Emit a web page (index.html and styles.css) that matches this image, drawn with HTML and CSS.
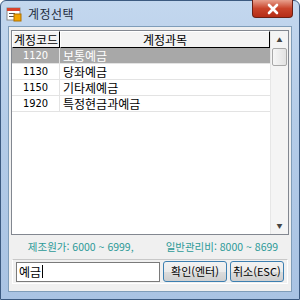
FILE: index.html
```html
<!DOCTYPE html>
<html lang="ko">
<head>
<meta charset="UTF-8" />
<title>계정선택</title>
<link rel="stylesheet" href="styles.css">
</head>
<body>
  <div class="window">
    <div class="titlebar">
      <svg class="app-icon" width="16" height="16" viewBox="0 0 16 16">
        <rect x="1" y="2" width="13" height="12" fill="#fff" stroke="#8a8a8a"/>
        <rect x="1" y="2" width="13" height="3" fill="#d9432b"/>
        <rect x="3" y="7" width="6" height="1" fill="#555"/>
        <rect x="3" y="10" width="5" height="1" fill="#555"/>
        <rect x="8" y="8" width="7" height="7" fill="#f2a500" stroke="#b07000"/>
      </svg>
      <span class="title">계정선택</span>
      <div class="close-btn">
        <svg width="14" height="12" viewBox="0 0 14 12">
          <path d="M3 2 L11 10 M11 2 L3 10" stroke="#fff" stroke-width="2.6" stroke-linecap="round"/>
        </svg>
      </div>
    </div>
    <div class="client">
      <div class="listview">
        <div class="list-main">
          <div class="list-header">
            <div class="col-code">계정코드</div>
            <div class="col-name">계정과목</div>
          </div>
          <div class="list-body" id="list-body"></div>
        </div>
        <div class="scrollbar">
          <div class="arrow">▲</div>
          <div class="thumb"></div>
          <div class="track"></div>
          <div class="arrow">▼</div>
        </div>
      </div>
      <div class="range-info">
        <span>제조원가: 6000 ~ 6999,</span>
        <span>일반관리비: 8000 ~ 8699</span>
      </div>
      <div class="search-panel">
        <div class="search-input">예금<span class="caret"></span></div>
        <button class="btn btn-ok">확인(엔터)</button>
        <button class="btn btn-cancel">취소(ESC)</button>
      </div>
    </div>
  </div>

<script>
  const accounts = [
    { code: '1120', name: '보통예금' },
    { code: '1130', name: '당좌예금' },
    { code: '1150', name: '기타제예금' },
    { code: '1920', name: '특정현금과예금' }
  ];

  const listBody = document.getElementById('list-body');
  accounts.forEach((a, i) => {
    const row = document.createElement('div');
    row.className = 'list-row' + (i === 0 ? ' selected' : '');
    row.innerHTML = `<div class="col-code">${a.code}</div><div class="col-name">${a.name}</div>`;
    listBody.appendChild(row);
  });
</script>
</body>
</html>
```

FILE: styles.css
```css
body, html {
  margin: 0;
  padding: 0;
  background: #fff;
  font-family: "Noto Sans CJK KR", "DejaVu Sans", sans-serif;
}
.window {
  width: 300px;
  height: 300px;
  box-sizing: border-box;
  border: 1px solid #3c5a80;
  border-radius: 6px 6px 0 0;
  background: linear-gradient(#c3d7ee, #b4cce8 40%, #a9c3e3);
  display: flex;
  flex-direction: column;
}
.titlebar {
  height: 25px;
  display: flex;
  align-items: center;
  padding-left: 5px;
  position: relative;
}
.app-icon {
  margin-right: 6px;
}
.title {
  font-size: 12px;
  color: #1e2b3b;
  letter-spacing: 0.5px;
}
.close-btn {
  position: absolute;
  right: 6px;
  top: -1px;
  width: 41px;
  height: 18px;
  box-sizing: border-box;
  border: 1px solid #6b1f14;
  border-top: none;
  border-radius: 0 0 4px 4px;
  background: linear-gradient(#e8a08d, #c9442b 50%, #b52d16);
  display: flex;
  justify-content: center;
  align-items: center;
}
.client {
  flex: 1;
  margin: 0 7px 7px 7px;
  border: 1px solid #7f9db9;
  background: #f0f0f0;
  display: flex;
  flex-direction: column;
  padding: 3px 2px 0 2px;
}
.listview {
  height: 203px;
  border: 1px solid #828790;
  background: #fff;
  display: flex;
}
.list-main {
  flex: 1;
  display: flex;
  flex-direction: column;
}
.list-header {
  display: flex;
  height: 17px;
  font-size: 12px;
  line-height: 16px;
  color: #000;
}
.list-header > div {
  box-sizing: border-box;
  border: 1px solid #000;
  border-top-color: #fff;
  border-left-color: #fff;
  background: #f3f3f3;
  text-align: center;
}
.col-code {
  width: 48px;
  flex: none;
}
.col-name {
  flex: 1;
}
.list-row {
  display: flex;
  height: 16px;
  font-size: 12px;
  line-height: 15px;
  color: #000;
}
.list-row > div {
  box-sizing: border-box;
  border-bottom: 1px solid #e3e3e3;
}
.list-row .col-code {
  text-align: center;
  border-right: 1px solid #e3e3e3;
  font-family: "DejaVu Sans Condensed", "DejaVu Sans", sans-serif;
  font-size: 11px;
}
.list-row .col-name {
  padding-left: 3px;
}
.list-row.selected > div {
  background: #a8a8a8;
  color: #fff;
}
.scrollbar {
  width: 17px;
  border-left: 1px solid #e6e6e6;
  background: #f4f4f4;
  display: flex;
  flex-direction: column;
}
.arrow {
  height: 17px;
  font-size: 6px;
  color: #444;
  text-align: center;
  line-height: 17px;
}
.thumb {
  height: 16px;
  margin: 0 1px;
  border: 1px solid #a8a8a8;
  border-radius: 2px;
  background: linear-gradient(90deg, #f6f6f6, #e2e2e2);
}
.track {
  flex: 1;
}
.range-info {
  height: 22px;
  display: flex;
  justify-content: center;
  gap: 32px;
  align-items: center;
  font-size: 10.5px;
  color: #2d9a98;
  padding: 0 0 2px 6px;
}
.search-panel {
  flex: 1;
  margin: 0 1px 7px 1px;
  border: 1px solid #ffffff;
  border-top-color: #c8c8c8;
  display: flex;
  align-items: center;
  gap: 3px;
  padding: 0 3px 0 3px;
}
.search-input {
  width: 146px;
  height: 20px;
  box-sizing: border-box;
  border: 1px solid #7a7a7a;
  background: #fff;
  font-size: 12px;
  line-height: 18px;
  padding-left: 2px;
  display: flex;
  align-items: center;
}
.caret {
  width: 1px;
  height: 13px;
  background: #000;
  margin-left: 1px;
}
.btn {
  height: 21px;
  padding: 0;
  white-space: nowrap;
  font-family: "Noto Sans CJK KR", "DejaVu Sans", sans-serif;
  font-size: 11px;
  color: #000;
  border: 1px solid #3c7fb1;
  border-radius: 3px;
  background: linear-gradient(#f2f2f2, #ebebeb 50%, #dddddd 51%, #cfcfcf);
  line-height: 17px;
}
.btn-ok {
  width: 64px;
}
.btn-cancel {
  width: 55px;
}
```
